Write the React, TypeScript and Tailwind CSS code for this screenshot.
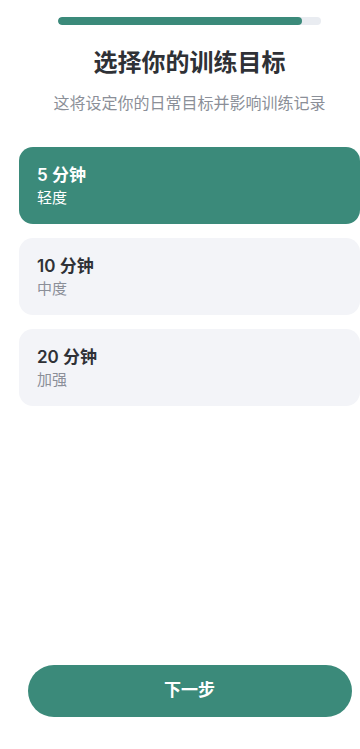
import { useState } from "react";

const options = [
  { mins: "5 分钟", level: "轻度" },
  { mins: "10 分钟", level: "中度" },
  { mins: "20 分钟", level: "加强" },
];

export default function App() {
  const [picked, setPicked] = useState(0);

  return (
    <div
      className="flex h-[749px] w-[360px] flex-col overflow-hidden bg-white pl-[19px]"
      style={{ fontFamily: 'Inter, "Noto Sans CJK SC", sans-serif' }}
    >
      <div className="mx-auto mt-[17px] h-[8px] w-[263px] overflow-hidden rounded-full bg-[#e9ecf1]">
        <div className="h-full w-[244px] rounded-full bg-[#3b8a7a]" />
      </div>

      <h1 className="mt-[20px] text-center text-[24px] leading-[36px] font-bold text-[#2f3136]">
        选择你的训练目标
      </h1>
      <p className="mt-[10px] text-center text-[16px] leading-[24px] text-[#8b8f98]">
        这将设定你的日常目标并影响训练记录
      </p>

      <div className="mt-[32px] flex flex-col gap-[14px]">
        {options.map((o, i) => {
          const on = picked === i;
          return (
            <button
              key={o.mins}
              onClick={() => setPicked(i)}
              className={
                "flex h-[77px] w-[341px] flex-col justify-center rounded-[14px] pl-[18px] text-left " +
                (on ? "bg-[#3b8a7a]" : "bg-[#f3f4f8]")
              }
            >
              <span className={"text-[17px] leading-[24px] font-semibold " + (on ? "text-white" : "text-[#2f3136]")}>
                {o.mins}
              </span>
              <span className={"text-[15px] leading-[21px] " + (on ? "text-white" : "text-[#8b8f98]")}>
                {o.level}
              </span>
            </button>
          );
        })}
      </div>

      <div className="flex-1" />

      <button className="mx-auto mb-[32px] h-[52px] w-[324px] rounded-full bg-[#3b8a7a] text-[17px] font-semibold text-white">
        下一步
      </button>
    </div>
  );
}
